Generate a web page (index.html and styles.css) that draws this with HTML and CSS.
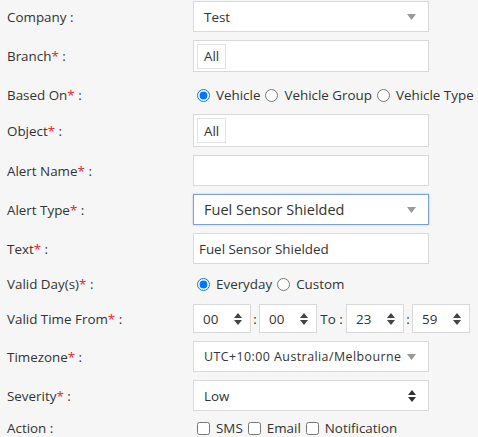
FILE: index.html
```html
<!DOCTYPE html>
<html lang="en">
<head>
    <meta charset="UTF-8">
    <title>Alert Settings</title>
    <link rel="stylesheet" href="styles.css">
</head>
<body>
    <form class="alert-form">
        <div class="row">
            <label class="label">Company :</label>
            <div class="field select">
                <span>Test</span>
                <svg class="caret" width="9" height="6" viewBox="0 0 9 6"><path d="M0 0h9L4.5 6z"/></svg>
            </div>
        </div>

        <div class="row">
            <label class="label">Branch<span class="req">*</span> :</label>
            <div class="field tags"><span class="tag">All</span></div>
        </div>

        <div class="row choice">
            <label class="label">Based On<span class="req">*</span> :</label>
            <div class="options">
                <label><input type="radio" name="based" checked> Vehicle</label>
                <label><input type="radio" name="based"> Vehicle Group</label>
                <label><input type="radio" name="based"> Vehicle Type</label>
            </div>
        </div>

        <div class="row">
            <label class="label">Object<span class="req">*</span> :</label>
            <div class="field tags tall"><span class="tag">All</span></div>
        </div>

        <div class="row">
            <label class="label">Alert Name<span class="req">*</span> :</label>
            <div class="field"></div>
        </div>

        <div class="row">
            <label class="label">Alert Type<span class="req">*</span> :</label>
            <div class="field select focused">
                <span class="big">Fuel Sensor Shielded</span>
                <svg class="caret" width="9" height="6" viewBox="0 0 9 6"><path d="M0 0h9L4.5 6z"/></svg>
            </div>
        </div>

        <div class="row">
            <label class="label">Text<span class="req">*</span> :</label>
            <div class="field text">Fuel Sensor Shielded</div>
        </div>

        <div class="row choice short">
            <label class="label">Valid Day(s)<span class="req">*</span> :</label>
            <div class="options">
                <label><input type="radio" name="days" checked> Everyday</label>
                <label><input type="radio" name="days"> Custom</label>
            </div>
        </div>

        <div class="row">
            <label class="label">Valid Time From<span class="req">*</span> :</label>
            <div class="times">
                <div class="field spin">00<svg class="updown" width="8" height="12" viewBox="0 0 8 12"><path d="M0 5h8L4 0zM0 7h8L4 12z"/></svg></div>
                <span class="sep">:</span>
                <div class="field spin">00<svg class="updown" width="8" height="12" viewBox="0 0 8 12"><path d="M0 5h8L4 0zM0 7h8L4 12z"/></svg></div>
                <span class="sep to">To :</span>
                <div class="field spin">23<svg class="updown" width="8" height="12" viewBox="0 0 8 12"><path d="M0 5h8L4 0zM0 7h8L4 12z"/></svg></div>
                <span class="sep">:</span>
                <div class="field spin">59<svg class="updown" width="8" height="12" viewBox="0 0 8 12"><path d="M0 5h8L4 0zM0 7h8L4 12z"/></svg></div>
            </div>
        </div>

        <div class="row">
            <label class="label">Timezone<span class="req">*</span> :</label>
            <div class="field select">
                <span class="zone">UTC+10:00 Australia/Melbourne</span>
                <svg class="caret" width="9" height="6" viewBox="0 0 9 6"><path d="M0 0h9L4.5 6z"/></svg>
            </div>
        </div>

        <div class="row">
            <label class="label">Severity<span class="req">*</span> :</label>
            <div class="field select">
                <span>Low</span>
                <svg class="updown dark" width="8" height="12" viewBox="0 0 8 12"><path d="M0 5h8L4 0zM0 7h8L4 12z"/></svg>
            </div>
        </div>

        <div class="row choice action">
            <label class="label">Action :</label>
            <div class="options">
                <label><input type="checkbox"> SMS</label>
                <label><input type="checkbox"> Email</label>
                <label><input type="checkbox"> Notification</label>
            </div>
        </div>
    </form>
</body>
</html>
```

FILE: styles.css
```css
body {
    margin: 0;
    padding: 1px 0 0 7px;
    background-color: #f6f6f6;
    color: #333;
    font-family: "Open Sans", Arial, sans-serif;
    font-size: 13.4px;
    white-space: nowrap;
    overflow: hidden;
}

.row {
    display: flex;
    align-items: center;
    margin-bottom: 8px;
}

.label {
    width: 186px;
    flex-shrink: 0;
}

.req {
    color: #e8222a;
}

.field {
    box-sizing: border-box;
    width: 236px;
    height: 31px;
    flex-shrink: 0;
    background-color: #fff;
    border: 1px solid #d9d9d9;
    display: flex;
    align-items: center;
    padding: 0 10px;
}

.select {
    justify-content: space-between;
    padding-right: 12px;
}

.caret {
    fill: #999;
    flex-shrink: 0;
}

.focused {
    border-color: #7b9fd9;
    box-shadow: 0 0 2px rgba(80, 130, 210, 0.4);
}

.big {
    font-size: 14.5px;
}

.zone {
    font-size: 12.4px;
    letter-spacing: 0.45px;
}

.text {
    padding-left: 5px;
}

.tags {
    height: 32px;
    padding: 0 3px;
}

.tags.tall {
    height: 33px;
}

.tag {
    box-sizing: border-box;
    height: 25px;
    padding: 0 6px;
    display: flex;
    align-items: center;
    border: 1px solid #e2e2e2;
}

.choice {
    height: 26px;
    padding-top: 4px;
    box-sizing: border-box;
}

.choice.short {
    height: 24px;
    padding-top: 0;
}

.choice.action {
    height: 20px;
    padding-top: 0;
    padding-bottom: 2px;
}

.options {
    display: flex;
    align-items: center;
}

.options label {
    display: flex;
    align-items: center;
    margin-right: 1px;
}

.options input {
    margin: 0 6px 0 4px;
    width: 13px;
    height: 13px;
}

.times {
    display: flex;
    align-items: center;
}

.spin {
    width: 58px;
    height: 29px;
    justify-content: space-between;
    padding: 0 8px 0 9px;
}

.updown {
    fill: #444;
    flex-shrink: 0;
}

.updown.dark {
    fill: #333;
}

.sep {
    width: 8px;
    text-align: center;
}

.sep.to {
    width: 29px;
}
```
